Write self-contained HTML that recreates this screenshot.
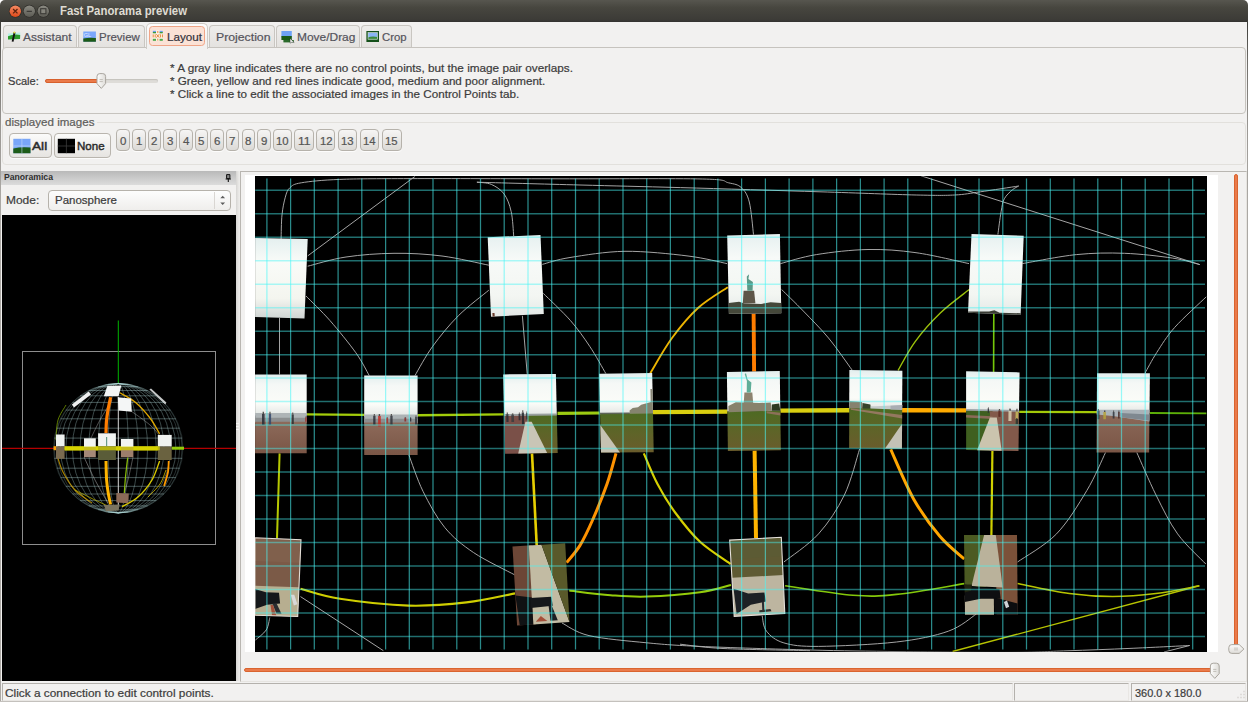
<!DOCTYPE html>
<html lang="en"><head><meta charset="utf-8"><title>Fast Panorama preview</title>
<style>
html,body{margin:0;padding:0;background:#fff}
body{width:1248px;height:702px;position:relative;overflow:hidden;font-family:"Liberation Sans","DejaVu Sans",sans-serif}
#win{position:absolute;left:0;top:0;width:1248px;height:702px;background:#f2f1f0;border-radius:5px 5px 0 0;overflow:hidden}
.t{position:absolute;white-space:nowrap;transform-origin:0 50%;display:block;-webkit-text-stroke:.22px currentColor}
.a{position:absolute;box-sizing:border-box}
.tab{position:absolute;box-sizing:border-box;top:25px;height:23px;border:1px solid #c9c6c1;border-bottom:none;border-radius:4px 4px 0 0;background:linear-gradient(#eeedeb,#e4e2df)}
.btn{position:absolute;box-sizing:border-box;border:1px solid #b9b5ae;border-radius:4px;background:linear-gradient(#fbfbfa,#e6e4e1);box-shadow:0 1px 0 rgba(255,255,255,.7)}
.nb{position:absolute;box-sizing:border-box;top:129px;height:22px;border:1px solid #b6b2ab;border-radius:4px;background:linear-gradient(#f6f5f4,#dcdad6);box-shadow:0 1px 0 rgba(255,255,255,.8)}
svg{position:absolute;left:0;top:0}
</style></head><body><div id="win">
<div class="a" style="left:0;top:0;width:1248px;height:22px;background:linear-gradient(#57564f,#47463f 35%,#3c3b37 90%,#33322f)"></div>
<div class="a" style="left:0;top:21px;width:1.3px;height:681px;background:linear-gradient(#3c3b37,#6f6d69 40px,#9c9995 110px,#aba8a4 180px,#aba8a4)"></div>
<div class="a" style="left:1246.6px;top:21px;width:1.4px;height:681px;background:linear-gradient(#3c3b37,#6f6d69 40px,#9c9995 110px,#aba8a4 180px,#aba8a4)"></div>
<div class="a" style="left:0;top:701px;width:1248px;height:1px;background:#c4c1bd"></div>
<svg width="60" height="22" viewBox="0 0 60 22">
<defs><linearGradient id="gc" x1="0" y1="0" x2="0" y2="1"><stop offset="0" stop-color="#f58a63"/><stop offset="1" stop-color="#df4a1a"/></linearGradient>
<linearGradient id="gg" x1="0" y1="0" x2="0" y2="1"><stop offset="0" stop-color="#8b8a82"/><stop offset="1" stop-color="#5c5b54"/></linearGradient></defs>
<circle cx="15.3" cy="11.2" r="6.4" fill="#2f2e2a"/><circle cx="15.3" cy="11.2" r="5.7" fill="url(#gc)"/>
<path d="M13.1 9 L17.5 13.4 M17.5 9 L13.1 13.4" stroke="#5e2410" stroke-width="1.3" fill="none"/>
<circle cx="29.3" cy="11.2" r="6.4" fill="#2f2e2a"/><circle cx="29.3" cy="11.2" r="5.7" fill="url(#gg)"/>
<path d="M26.7 11.4 H31.9" stroke="#3c3b37" stroke-width="1.3"/>
<circle cx="43.3" cy="11.2" r="6.4" fill="#2f2e2a"/><circle cx="43.3" cy="11.2" r="5.7" fill="url(#gg)"/>
<rect x="40.7" y="8.7" width="5.2" height="5" fill="#85847c" stroke="#3c3b37" stroke-width="1.1"/>
</svg>
<span class="t" style="left:59.70px;top:3.00px;font-size:12px;line-height:16px;color:#dfdbd2;font-weight:bold;-webkit-text-stroke:0;transform:scaleX(0.9474);">Fast Panorama preview</span>
<div class="tab" style="left:2.5px;width:74.2px"></div>
<div class="tab" style="left:78.3px;width:66.4px"></div>
<div class="tab" style="left:208.8px;width:66.1px"></div>
<div class="tab" style="left:276.3px;width:83.7px"></div>
<div class="tab" style="left:361.3px;width:51.1px"></div>
<div class="a" style="left:2px;top:47px;width:1244px;height:67px;border:1px solid #c6c3be;border-radius:4px;background:#f2f1f0"></div>
<div class="a" style="left:146px;top:23px;width:62px;height:26px;border:1px solid #cfccc7;border-bottom:none;border-radius:5px 5px 0 0;background:linear-gradient(#fdfdfd,#f2f1f0 70%)"></div>
<div class="a" style="left:149px;top:26px;width:56px;height:20px;border:1px solid #f0a587;border-radius:3.5px;background:#fbe2d6"></div>
<span class="t" style="left:23.10px;top:29.00px;font-size:11.8px;line-height:16px;color:#55545c;transform:scaleX(1.0152);">Assistant</span>
<span class="t" style="left:98.90px;top:29.00px;font-size:11.8px;line-height:16px;color:#55545c;transform:scaleX(0.9722);">Preview</span>
<span class="t" style="left:166.80px;top:29.00px;font-size:11.8px;line-height:16px;color:#33323c;transform:scaleX(0.9880);">Layout</span>
<span class="t" style="left:215.50px;top:29.00px;font-size:11.8px;line-height:16px;color:#55545c;transform:scaleX(1.0387);">Projection</span>
<span class="t" style="left:296.70px;top:29.00px;font-size:11.8px;line-height:16px;color:#55545c;transform:scaleX(1.0120);">Move/Drag</span>
<span class="t" style="left:381.70px;top:29.00px;font-size:11.8px;line-height:16px;color:#55545c;transform:scaleX(0.9619);">Crop</span>
<svg width="420" height="50" viewBox="0 0 420 50">
<g><path d="M8 33.5 L20.3 32.5 L20 39 L8 39.6 Z" fill="#b8f0e4"/><path d="M8 36.3 Q14 33.5 20.2 35 L20 39 L8 39.6 Z" fill="#2c9a2c"/>
<path d="M14.6 32.2 L12.6 41.6" stroke="#111" stroke-width="1.9"/><circle cx="14.4" cy="32.6" r="1" fill="#e8e040"/></g>
<g><rect x="83.3" y="31.5" width="12.6" height="10.2" fill="#7ba7fb"/><path d="M83.3 38.6 Q89 37.2 95.9 38 V41.7 H83.3 Z" fill="#1c5a16"/>
<text x="83.8" y="36.6" font-family="Liberation Sans,sans-serif" font-size="5.5" fill="#e4ecff">GL</text></g>
<g><rect x="152.4" y="30.4" width="10.8" height="10.6" fill="#fdf1e6"/>
<rect x="152.8" y="30.8" width="3.2" height="1.3" fill="#6d9eea"/><rect x="152.8" y="32" width="3.2" height="1.3" fill="#3c9a3c"/>
<rect x="159.6" y="30.8" width="3.2" height="1.3" fill="#6d9eea"/><rect x="159.6" y="32" width="3.2" height="1.3" fill="#3c9a3c"/>
<rect x="152.8" y="38.4" width="3.2" height="1" fill="#b8e0b8"/><rect x="152.8" y="39.2" width="3.2" height="1.5" fill="#2c9a2c"/>
<rect x="159.6" y="38.4" width="3.2" height="1" fill="#b8e0b8"/><rect x="159.6" y="39.2" width="3.2" height="1.5" fill="#2c9a2c"/>
<path d="M153.2 34.4 V37.4 M155.2 34.4 V37.4 M160.4 34.4 V37.4 M162.4 34.4 V37.4 M156.4 34.2 L159.2 37.6 M159.2 34.2 L156.4 37.6 M157.8 31 V33 M157.8 38.6 V40.6" stroke="#e58a3c" stroke-width="1" fill="none"/></g>
<g><rect x="281.4" y="31" width="10.4" height="6.4" fill="#6ea2f6"/><rect x="281.4" y="36" width="10.4" height="4" fill="#1a5c1a"/>
<rect x="283.4" y="40" width="10.4" height="2.4" fill="#2a6a2a"/><path d="M290 38.4 L294.2 42.4 L291.6 42.2 L290.2 43.2 Z" fill="#fff" stroke="#222" stroke-width=".4"/></g>
<g><rect x="366.4" y="31" width="12.6" height="11" fill="#14501a"/><rect x="368" y="32.6" width="9.4" height="6.6" fill="#8ab4f4"/>
<path d="M368 37.4 Q372 36 377.4 37 V39.2 H368 Z" fill="#3c8a3c"/><rect x="368" y="32.6" width="9.4" height="6.6" fill="none" stroke="#dfe8d8" stroke-width=".6"/></g>
</svg>
<span class="t" style="left:7.80px;top:73.00px;font-size:11.8px;line-height:16px;color:#3c3c3c;transform:scaleX(0.9392);">Scale:</span>
<div class="a" style="left:45px;top:79px;width:113px;height:4px;border-radius:2px;background:#dedcd8;box-shadow:inset 0 1px 1px #c4c1bc"></div>
<div class="a" style="left:45px;top:79px;width:56px;height:4px;border-radius:2px;background:#ea7a4a;border:1px solid #d7602c"></div>
<svg width="120" height="95" viewBox="0 0 120 95"><defs><linearGradient id="gh" x1="0" y1="0" x2="1" y2="0"><stop offset="0" stop-color="#fdfdfc"/><stop offset="1" stop-color="#dedcd8"/></linearGradient></defs>
<path d="M99.8 73.6 H102.8 Q105.6 73.6 105.6 76.4 V83.6 L101.3 88.4 L97 83.6 V76.4 Q97 73.6 99.8 73.6 Z" fill="url(#gh)" stroke="#a9a59e" stroke-width="1"/>
<path d="M99.6 79.6 H102.8 M99.6 81.6 H102.8" stroke="#b5b1aa" stroke-width=".8"/></svg>
<span class="t" style="left:169.60px;top:60.00px;font-size:11.8px;line-height:16px;color:#3c3c3c;transform:scaleX(0.9958);">* A gray line indicates there are no control points, but the image pair overlaps.</span>
<span class="t" style="left:169.60px;top:73.00px;font-size:11.8px;line-height:16px;color:#3c3c3c;transform:scaleX(0.9868);">* Green, yellow and red lines indicate good, medium and poor alignment.</span>
<span class="t" style="left:169.60px;top:86.00px;font-size:11.8px;line-height:16px;color:#3c3c3c;transform:scaleX(0.9878);">* Click a line to edit the associated images in the Control Points tab.</span>
<div class="a" style="left:2px;top:122px;width:1244px;height:43px;border:1px solid #e2e0dc;border-radius:4px"></div>
<div class="a" style="left:3px;top:118px;width:94px;height:10px;background:#f2f1f0"></div>
<span class="t" style="left:5.20px;top:114.00px;font-size:11.8px;line-height:16px;color:#5e5d5b;transform:scaleX(0.9817);">displayed images</span>
<div class="btn" style="left:9px;top:133px;width:43px;height:25px"></div>
<div class="btn" style="left:54px;top:133px;width:57px;height:25px"></div>
<svg width="120" height="160" viewBox="0 0 120 160">
<rect x="13.3" y="138.8" width="17.2" height="14.4" fill="#79a6f7"/><path d="M13.3 148.4 Q22 146.6 30.5 147.6 V153.2 H13.3 Z" fill="#1d5c18"/>
<path d="M21.9 138.8 V153.2 M13.3 146 H30.5" stroke="#cfe0fb" stroke-width=".7" opacity=".8"/>
<rect x="57.8" y="138.8" width="17.2" height="14.4" fill="#000"/><path d="M66.4 138.8 V153.2 M57.8 146 H75" stroke="#3c3c3c" stroke-width=".8"/>
</svg>
<span class="t" style="left:32.00px;top:138.00px;font-size:11.8px;line-height:16px;color:#2a2a2a;transform:scaleX(1.1590);-webkit-text-stroke:.45px #2a2a2a;">All</span>
<span class="t" style="left:76.80px;top:138.00px;font-size:11.8px;line-height:16px;color:#2a2a2a;transform:scaleX(0.9785);-webkit-text-stroke:.45px #2a2a2a;">None</span>
<div class="nb" style="left:116.0px;width:14.0px"></div>
<span class="t" style="left:119.80px;top:133.00px;font-size:11.6px;line-height:16px;color:#555;transform:scaleX(0.9921);">0</span>
<div class="nb" style="left:132.1px;width:13.5px"></div>
<span class="t" style="left:135.65px;top:133.00px;font-size:11.6px;line-height:16px;color:#555;transform:scaleX(0.9921);">1</span>
<div class="nb" style="left:147.7px;width:13.5px"></div>
<span class="t" style="left:151.25px;top:133.00px;font-size:11.6px;line-height:16px;color:#555;transform:scaleX(0.9921);">2</span>
<div class="nb" style="left:163.4px;width:13.4px"></div>
<span class="t" style="left:166.90px;top:133.00px;font-size:11.6px;line-height:16px;color:#555;transform:scaleX(0.9921);">3</span>
<div class="nb" style="left:179.0px;width:13.5px"></div>
<span class="t" style="left:182.55px;top:133.00px;font-size:11.6px;line-height:16px;color:#555;transform:scaleX(0.9921);">4</span>
<div class="nb" style="left:194.6px;width:13.4px"></div>
<span class="t" style="left:198.10px;top:133.00px;font-size:11.6px;line-height:16px;color:#555;transform:scaleX(0.9921);">5</span>
<div class="nb" style="left:210.2px;width:13.5px"></div>
<span class="t" style="left:213.75px;top:133.00px;font-size:11.6px;line-height:16px;color:#555;transform:scaleX(0.9921);">6</span>
<div class="nb" style="left:225.9px;width:13.4px"></div>
<span class="t" style="left:229.40px;top:133.00px;font-size:11.6px;line-height:16px;color:#555;transform:scaleX(0.9921);">7</span>
<div class="nb" style="left:241.5px;width:13.5px"></div>
<span class="t" style="left:245.05px;top:133.00px;font-size:11.6px;line-height:16px;color:#555;transform:scaleX(0.9921);">8</span>
<div class="nb" style="left:257.1px;width:13.5px"></div>
<span class="t" style="left:260.65px;top:133.00px;font-size:11.6px;line-height:16px;color:#555;transform:scaleX(0.9921);">9</span>
<div class="nb" style="left:272.7px;width:19.5px"></div>
<span class="t" style="left:276.15px;top:133.00px;font-size:11.6px;line-height:16px;color:#555;transform:scaleX(0.9766);">10</span>
<div class="nb" style="left:294.4px;width:19.4px"></div>
<span class="t" style="left:297.80px;top:133.00px;font-size:11.6px;line-height:16px;color:#555;transform:scaleX(1.0465);">11</span>
<div class="nb" style="left:316.3px;width:19.2px"></div>
<span class="t" style="left:319.60px;top:133.00px;font-size:11.6px;line-height:16px;color:#555;transform:scaleX(0.9766);">12</span>
<div class="nb" style="left:337.9px;width:19.2px"></div>
<span class="t" style="left:341.20px;top:133.00px;font-size:11.6px;line-height:16px;color:#555;transform:scaleX(0.9766);">13</span>
<div class="nb" style="left:360.0px;width:19.2px"></div>
<span class="t" style="left:363.30px;top:133.00px;font-size:11.6px;line-height:16px;color:#555;transform:scaleX(0.9766);">14</span>
<div class="nb" style="left:381.6px;width:20.0px"></div>
<span class="t" style="left:385.30px;top:133.00px;font-size:11.6px;line-height:16px;color:#555;transform:scaleX(0.9766);">15</span>
<div class="a" style="left:1px;top:171px;width:235px;height:14px;background:linear-gradient(#b9b9b9,#dcdcdc)"></div>
<span class="t" style="left:4.20px;top:169.00px;font-size:8.8px;line-height:16px;color:#2e2e2e;font-weight:bold;-webkit-text-stroke:0;transform:scaleX(0.9822);">Panoramica</span>
<svg width="240" height="215" viewBox="0 0 240 215">
<path d="M226.6 174.6 H229.9 V178.6 H226.6 Z" fill="#888" stroke="#111" stroke-width="1"/><path d="M225.6 179 H231 M228.3 179 V182" stroke="#111" stroke-width="1.1"/>
</svg>
<span class="t" style="left:5.80px;top:192.00px;font-size:11.8px;line-height:16px;color:#3c3c3c;transform:scaleX(1.0124);">Mode:</span>
<div class="a" style="left:48px;top:190px;width:183px;height:21px;border:1px solid #b6b2ab;border-radius:4px;background:linear-gradient(#fdfdfd,#efeeec)"></div>
<div class="a" style="left:214px;top:192px;width:1px;height:17px;background:#d9d6d2"></div>
<svg width="240" height="215" viewBox="0 0 240 215"><path d="M220.3 198.2 L222.7 195.7 L225.1 198.2 Z M220.3 202.6 L222.7 205.1 L225.1 202.6 Z" fill="#5c5c5c"/></svg>
<span class="t" style="left:55.00px;top:192.00px;font-size:11.8px;line-height:16px;color:#3c3c3c;transform:scaleX(0.9743);">Panosphere</span>
<div class="a" style="left:2px;top:215px;width:234px;height:466px;background:#000"></div>
<div class="a" style="left:235.6px;top:171px;width:4.6px;height:510px;background:linear-gradient(to right,#d6d5d3,#e6e5e3 55%,#eeedeb)"></div>
<div class="a" style="left:236.4px;top:422.6px;width:2.4px;height:1px;background:#f6f6f5"></div><div class="a" style="left:236.4px;top:425.6px;width:2.4px;height:1px;background:#f6f6f5"></div><div class="a" style="left:236.4px;top:428.6px;width:2.4px;height:1.4px;background:#fafafa"></div>
<div class="a" style="left:240px;top:171px;width:1007px;height:511px;border:1px solid #b9b6b1;border-bottom-color:#e6e4e0;border-right-color:#e6e4e0"></div>
<div class="a" style="left:245px;top:175.4px;width:973px;height:476.5px;background:#fff"></div>
<div class="a" style="left:255.1px;top:176.3px;width:951.5px;height:475.5px;background:#000"></div>
<div class="a" style="left:1234px;top:174px;width:4px;height:474px;border-radius:2px;background:#ea7a4a;border:1px solid #d9642f"></div>
<div class="a" style="left:243.5px;top:668px;width:968px;height:4px;border-radius:2px;background:#ea7a4a;border:1px solid #d9642f"></div>
<svg width="1248" height="702" viewBox="0 0 1248 702" style="pointer-events:none">
<path d="M1231.8 644.6 H1239.2 L1243.9 649 L1239.2 653.4 H1231.8 Q1228.8 653.4 1228.8 650.4 V647.6 Q1228.8 644.6 1231.8 644.6 Z" fill="url(#gh2)" stroke="#a9a59e"/>
<defs><linearGradient id="gh2" x1="0" y1="0" x2="0" y2="1"><stop offset="0" stop-color="#fdfdfc"/><stop offset="1" stop-color="#dedcd8"/></linearGradient>
<linearGradient id="gh3" x1="0" y1="0" x2="1" y2="0"><stop offset="0" stop-color="#fdfdfc"/><stop offset="1" stop-color="#dedcd8"/></linearGradient></defs>
<path d="M1235 647.4 V650.6 M1237 647.4 V650.6" stroke="#b5b1aa" stroke-width=".8"/>
<path d="M1213.2 663.2 H1216.4 Q1219.2 663.2 1219.2 666 V673.6 L1214.8 678.4 L1210.4 673.6 V666 Q1210.4 663.2 1213.2 663.2 Z" fill="url(#gh3)" stroke="#a9a59e"/>
<path d="M1213.2 669.4 H1216.4 M1213.2 671.4 H1216.4" stroke="#b5b1aa" stroke-width=".8"/>
</svg>
<div class="a" style="left:2px;top:683px;width:1011px;height:18px;border:1px solid #b4b1ac;border-right-color:#e9e7e4;border-bottom-color:#e9e7e4"></div>
<div class="a" style="left:1014px;top:683px;width:115px;height:18px;border:1px solid #b4b1ac;border-right-color:#e9e7e4;border-bottom-color:#e9e7e4"></div>
<div class="a" style="left:1131px;top:683px;width:115px;height:18px;border:1px solid #b4b1ac;border-right-color:#e9e7e4;border-bottom-color:#e9e7e4"></div>
<span class="t" style="left:4.90px;top:685.00px;font-size:11.8px;line-height:16px;color:#3c3c3c;transform:scaleX(1.0043);">Click a connection to edit control points.</span>
<span class="t" style="left:1134.80px;top:685.00px;font-size:11.8px;line-height:16px;color:#3c3c3c;transform:scaleX(0.9286);">360.0 x 180.0</span>
<svg width="1248" height="702" viewBox="0 0 1248 702"><path d="M1243.5 691.5h1M1243.5 694.5h1M1240.5 694.5h1M1243.5 697.5h1M1240.5 697.5h1M1237.5 697.5h1" stroke="#c9c6c1" stroke-width="1.4"/></svg>
<svg width="1248" height="702" viewBox="0 0 1248 702">
<defs>
<clipPath id="cv"><rect x="255.1" y="176.3" width="951.5" height="475.5"/></clipPath>
<linearGradient id="sky" x1="0" y1="0" x2="0" y2="1"><stop offset="0" stop-color="#e2eeee"/><stop offset=".25" stop-color="#f5f8f6"/><stop offset=".7" stop-color="#fbfcf8"/><stop offset="1" stop-color="#e2e6e4"/></linearGradient>
<linearGradient id="sky2" x1="0" y1="0" x2="0" y2="1"><stop offset="0" stop-color="#e4efef"/><stop offset=".3" stop-color="#f9fbf8"/><stop offset=".75" stop-color="#f4f5ef"/><stop offset="1" stop-color="#cfd4d3"/></linearGradient>
<linearGradient id="skyA" x1="0" y1="0" x2="0" y2="1"><stop offset="0" stop-color="#e6f0f0"/><stop offset=".3" stop-color="#f7faf8"/><stop offset=".75" stop-color="#f3f6f2"/><stop offset="1" stop-color="#e3e8e6"/></linearGradient>
<linearGradient id="brown" x1="0" y1="0" x2="0" y2="1"><stop offset="0" stop-color="#8d6a5a"/><stop offset="1" stop-color="#7a5646"/></linearGradient>
<linearGradient id="grass" x1="0" y1="0" x2="0" y2="1"><stop offset="0" stop-color="#4d6a22"/><stop offset=".5" stop-color="#5e6428"/><stop offset="1" stop-color="#6a5c2c"/></linearGradient>
</defs>
<g clip-path="url(#cv)">
<path d="M281.1 238.9C281.2 234.9 281.3 221.9 282 214.9C282.7 207.9 284 201.8 285.3 197.2C286.6 192.6 287.3 190 290 187.6C292.7 185.2 293 184.2 301.3 182.8C309.6 181.4 321.6 180.1 339.7 179.4C357.8 178.7 373.3 178.7 410 178.6C446.7 178.5 511.2 178.7 560 178.8C608.8 178.9 674.7 178.3 702.8 179C730.9 179.7 722.1 181.4 728.5 182.8C734.9 184.2 737.8 184.4 741.3 187.6C744.8 190.8 747.3 194.2 749.3 202C751.3 209.8 752.8 229.1 753.5 234.5" fill="none" stroke="#adadad" stroke-width="0.95"/>
<path d="M476.9 182.2C479.3 182.6 486.8 182.4 491.3 184.4C495.8 186.4 500.8 189.4 504.1 194C507.4 198.6 509.6 204.7 511.2 211.7C512.8 218.7 513.3 231.9 513.7 236" fill="none" stroke="#adadad" stroke-width="0.95"/>
<path d="M476.9 182.2C494.1 182.7 546.1 184.1 580 185C613.9 185.9 640.4 186.5 680.4 187.6C720.4 188.7 780.7 190.6 820 191.8C859.3 193 893.8 194.5 916.2 195C938.6 195.5 943.9 195.5 954.6 195C965.3 194.5 969.6 193.3 980.3 191.8C991 190.3 1012.3 187 1018.7 186" fill="none" stroke="#adadad" stroke-width="0.95"/>
<path d="M997.9 234.5C998.4 230.7 1000 217.6 1001.1 211.7C1002.2 205.8 1002.4 202.4 1004.3 198.8C1006.2 195.2 1009.9 192 1012.3 189.9C1014.7 187.8 1017.6 186.7 1018.7 186" fill="none" stroke="#adadad" stroke-width="0.95"/>
<path d="M921 175.8L1199.8 264.6" fill="none" stroke="#adadad" stroke-width="0.95"/>
<path d="M1022.4 263.6C1031.4 262.1 1059.4 256.3 1076.4 254.6C1093.4 252.9 1108.5 252.7 1124.5 253.3C1140.5 253.9 1160 256.2 1172.6 258.1C1185.1 260 1195.3 263.5 1199.8 264.6" fill="none" stroke="#adadad" stroke-width="0.95"/>
<path d="M780.5 263.6C786.5 262.1 801.8 256.9 816.4 254.6C831 252.2 851.4 249.8 868 249.5C884.6 249.2 899.2 250.3 916 252.7C932.8 255 960.2 261.8 969 263.6" fill="none" stroke="#adadad" stroke-width="0.95"/>
<path d="M307.7 266.2C314.1 264.7 331.6 259.1 346 257C360.4 254.8 378 253.5 394 253.3C410 253.1 426.2 254 442 256C457.8 258 481 263.7 488.8 265.2" fill="none" stroke="#adadad" stroke-width="0.95"/>
<path d="M542.3 264.4C546.9 263.2 556.2 259.7 570 257.5C583.8 255.3 605.3 251.6 625 251.3C644.7 251.1 671 253.9 688 256C705 258.1 720.5 262.3 727 263.6" fill="none" stroke="#adadad" stroke-width="0.95"/>
<path d="M307.7 255.9L415 176.4" fill="none" stroke="#adadad" stroke-width="0.95"/>
<path d="M306 296C310 300.1 321.7 311.2 330 320.6C338.3 330.1 349.3 343.6 355.8 352.7C362.3 361.8 367 371.7 369.2 375.5" fill="none" stroke="#adadad" stroke-width="0.95"/>
<path d="M488.8 290.2C483.7 294.5 467.7 306.4 458.3 315.8C448.9 325.2 439.9 336.4 432.7 346.3C425.5 356.2 417.9 370.6 415 375.5" fill="none" stroke="#adadad" stroke-width="0.95"/>
<path d="M522.4 315.8L527.2 373.8" fill="none" stroke="#adadad" stroke-width="0.95"/>
<path d="M543.3 293.4C547.8 297.9 562.8 311.8 570.5 320.6C578.2 329.4 583.8 337.5 589.7 346.3C595.6 355.1 603.1 369 605.8 373.5" fill="none" stroke="#adadad" stroke-width="0.95"/>
<path d="M279.5 318L279.5 374.5" fill="none" stroke="#adadad" stroke-width="0.95"/>
<path d="M781.6 289.5C785.2 293.1 795.5 302.9 803.3 311C811.1 319.1 820.4 328.2 828.5 338C836.6 347.8 848.1 364.6 852 369.9" fill="none" stroke="#adadad" stroke-width="0.95"/>
<path d="M1206.4 296.7C1201.1 301.8 1183 318.1 1174.7 327.4C1166.4 336.7 1161.6 345 1156.7 352.6C1151.8 360.2 1147 369.6 1145.1 373" fill="none" stroke="#adadad" stroke-width="0.95"/>
<path d="M1105.5 452.5C1102.4 458.9 1095 477 1086.8 490.6C1078.6 504.2 1068 522 1056.5 533.9C1045 545.8 1024 557.3 1017.5 562" fill="none" stroke="#adadad" stroke-width="0.95"/>
<path d="M1136.8 452.5C1140 459.6 1149.2 481.4 1156 495C1162.8 508.6 1169.3 522.4 1177.6 533.9C1185.9 545.4 1201.1 559 1205.8 564" fill="none" stroke="#adadad" stroke-width="0.95"/>
<path d="M859.6 449C857.1 456.7 851.2 480.9 844.4 495C837.5 509.1 828.6 522.7 818.5 533.9C808.4 545.1 789.7 557.3 783.9 562" fill="none" stroke="#adadad" stroke-width="0.95"/>
<path d="M408.7 454.5C411.1 460.6 417 479.2 423 491.3C429 503.4 436.3 517.2 444.7 527.4C453.1 537.6 461.9 544.7 473.6 552.6C485.3 560.5 508.1 571.3 515 575" fill="none" stroke="#adadad" stroke-width="0.95"/>
<path d="M300.5 596.6L383.4 650.7" fill="none" stroke="#adadad" stroke-width="0.95"/>
<path d="M269.8 617.5C269.2 619.6 268.6 626.2 266.2 630C263.8 633.8 257.2 638.3 255.4 640" fill="none" stroke="#adadad" stroke-width="0.95"/>
<path d="M562 623C566.5 625.1 574.9 632.3 589 635.6C603.1 638.9 628.2 641 646.7 642.8C665.2 644.6 672.8 645.2 700 646.4C727.2 647.6 776.7 649.1 810 650C843.3 650.9 866.7 651.2 900 651.6C933.3 652 982.2 652.5 1010 652.4C1037.8 652.3 1047 651.5 1067 650.8C1087 650.1 1109.5 649.3 1130 648.4C1150.5 647.5 1179.8 646 1189.7 645.5" fill="none" stroke="#adadad" stroke-width="0.95"/>
<path d="M1164 652L1189.7 645.5" fill="none" stroke="#adadad" stroke-width="0.95"/>
<path d="M762.2 616C762.9 618.5 762.9 626.7 766.5 631.2C770.1 635.7 775.2 640.4 783.9 642.9C792.6 645.4 799.8 646.5 818.5 646.4C837.2 646.2 874.8 644.5 896.4 642C918 639.5 935 635.9 948.3 631.2C961.6 626.5 971.7 616.9 976.4 614" fill="none" stroke="#adadad" stroke-width="0.95"/>
<path d="M680 644.2C687.2 644.9 701.3 647.4 723 648.5C744.7 649.6 795.5 650.3 810 650.7" fill="none" stroke="#adadad" stroke-width="0.95"/>
<path d="M306.8 414.3L364.4 414.8" fill="none" stroke="#a4cc0a" stroke-width="2.2"/>
<path d="M417.6 415.2L503.5 414.4" fill="none" stroke="#a2cc0a" stroke-width="2.4"/>
<path d="M557.5 413.4L599.4 413" fill="none" stroke="#9ccb12" stroke-width="3.2"/>
<path d="M652.6 412.2L727.5 411.6" fill="none" stroke="#d9ce10" stroke-width="4.2"/>
<path d="M780.4 410.6L849.6 410.2" fill="none" stroke="#d9ce10" stroke-width="4.4"/>
<path d="M902 410.2L966.4 410.4" fill="none" stroke="#ffab00" stroke-width="4.4"/>
<path d="M1019.2 411.8L1097.2 412.2" fill="none" stroke="#a3c908" stroke-width="2.2"/>
<path d="M1149.8 413L1206.6 413.4" fill="none" stroke="#5cae08" stroke-width="1.8"/>
<path d="M753.6 313.4L754.1 371.6" fill="none" stroke="#ff7d00" stroke-width="3.9"/>
<path d="M754.6 450.6L756 538" fill="none" stroke="#ffb400" stroke-width="4.0"/>
<path d="M993.8 314L993.6 372" fill="none" stroke="#74c80a" stroke-width="1.6"/>
<path d="M992.4 451L991.4 535.2" fill="none" stroke="#cfd000" stroke-width="2.2"/>
<path d="M279.6 453.4L277 538.4" fill="none" stroke="#b6c800" stroke-width="2.0"/>
<path d="M532 453.4L536.7 545" fill="none" stroke="#e6cf00" stroke-width="2.6"/>
<path d="M650.2 373.4C653.8 367.5 664 348.9 672 338C680 327.1 688.7 316.5 698 308C707.3 299.5 722.8 290.7 727.8 287.2" fill="none" stroke="#ecb400" stroke-width="1.9"/>
<path d="M616 453.4C614.5 458.5 610.9 472.9 607 484C603.1 495.1 597.1 509.8 592.6 520C588.1 530.2 584.3 538.3 580 545.4C575.7 552.5 568.8 559.8 566.6 562.7" fill="none" stroke="#ff9200" stroke-width="3.0"/>
<path d="M643.8 453.4C646.1 458.5 652.2 474.1 657.5 484C662.8 493.9 668.4 503.4 675.5 513C682.6 522.6 690.8 533.3 700 541.8C709.2 550.3 725.5 560.3 730.6 564" fill="none" stroke="#d6d000" stroke-width="2.2"/>
<path d="M890.7 449.4C894.5 457.7 905.6 484.8 913.7 499.2C921.9 513.6 931.2 526 939.6 536C948 546 960.2 555.2 964.3 559" fill="none" stroke="#ffa600" stroke-width="3.0"/>
<path d="M898.1 370.4C900.9 365.6 908 351.4 915 341.8C922 332.2 931.3 321.7 940.3 313C949.3 304.3 964.4 293.4 969.2 289.5" fill="none" stroke="#9cc10a" stroke-width="1.4"/>
<path d="M300.5 588.7C307.1 590.4 322 596 340 598.8C358 601.6 387.6 605 408.7 605.6C429.8 606.2 448.7 604.4 466.4 602.4C484.1 600.4 506.9 594.9 515 593.4" fill="none" stroke="#cfce00" stroke-width="2.1"/>
<path d="M569.2 590.5C576.1 591.3 597.7 594.2 610.6 595.2C623.5 596.2 631.8 597.1 646.7 596.6C661.6 596.1 686 594.2 700 592.3C714 590.4 725.8 586.2 731 585" fill="none" stroke="#94cc0a" stroke-width="2.0"/>
<path d="M785.1 585.8C796.4 587.4 834.5 593.9 853 595.3C871.5 596.7 877.9 596.3 896.4 594.4C914.9 592.5 953 585.4 964.3 583.6" fill="none" stroke="#84c80a" stroke-width="1.6"/>
<path d="M1017.5 583.6C1026.2 585.3 1053.5 591.4 1069.4 593.6C1085.3 595.8 1098.3 596.6 1112.7 596.6C1127.1 596.6 1141.6 595.4 1156 593.6C1170.4 591.8 1192.1 587.1 1199.3 585.8" fill="none" stroke="#b8c400" stroke-width="1.5"/>
<path d="M1199.3 585.8L952.6 651.5" fill="none" stroke="#b8c400" stroke-width="1.4"/>
<polygon points="255,238 307.7,239 304.5,318.5 255,317" fill="url(#sky2)"/>
<polygon points="487.7,237.2 540.5,235.1 543.8,314.1 491,316.7" fill="url(#skyA)"/>
<polygon points="492.4,313 494.5,312.9 494.7,316.5 492.6,316.6" fill="#6a3a2a"/>
<polygon points="727.2,235.4 779.9,234.1 781.3,313.3 728.9,313.7" fill="url(#skyA)"/>
<polygon points="728.7,303.1 739.1,301.8 744.4,303.4 761.2,304 770.6,302.3 781.1,303 781.3,313.3 728.9,313.7" fill="#45483a"/>
<polygon points="743.6,290.8 754.1,290.7 755.4,303.3 742.8,303.4" fill="#5d5648"/>
<polygon points="746.8,276.6 749.1,274.2 748.4,278.9 752.9,282 752.6,290.7 747.3,290.8" fill="#5a9a88"/>
<polygon points="971.5,234 1023.7,235.8 1020.6,314.8 968,312.8" fill="url(#skyA)"/>
<polygon points="968.1,311.6 989.1,311.6 994.4,310.2 999.6,312.8 1020.7,313.2 1020.6,314.8 968,312.8" fill="#3a3c34"/>
<polygon points="255,374.4 306.7,374.4 306.7,415.4 255,415.4" fill="url(#sky)"/>
<polygon points="255,413.1 306.7,413.1 306.7,422.5 255,422.5" fill="#aeb4b6"/>
<polygon points="255,417.8 306.7,417.8 306.7,422.5 255,422.5" fill="#8c8f90"/>
<polygon points="255,421.7 306.7,421.7 306.7,453.3 255,453.3" fill="url(#brown)"/>
<polygon points="262,413.9 264.6,413.9 264.6,424.9 262,424.9" fill="#2a2c34" opacity=".85"/>
<polygon points="262.6,411.8 264,411.8 264,413.9 262.6,413.9" fill="#3a3430" opacity=".8"/>
<polygon points="268.9,413.9 271.1,413.9 271.1,424.9 268.9,424.9" fill="#34466a" opacity=".85"/>
<polygon points="269.4,411.8 270.6,411.8 270.6,413.9 269.4,413.9" fill="#3a3430" opacity=".8"/>
<polygon points="291.7,414.4 293.8,414.4 293.8,424.1 291.7,424.1" fill="#2c2e30" opacity=".85"/>
<polygon points="292.2,412.5 293.3,412.5 293.3,414.4 292.2,414.4" fill="#3a3430" opacity=".8"/>
<polygon points="305.3,417.2 306.6,417.2 306.6,421.7 305.3,421.7" fill="#a02018" opacity=".85"/>
<polygon points="305.6,416.3 306.3,416.3 306.3,417.2 305.6,417.2" fill="#3a3430" opacity=".8"/>
<polygon points="364.2,375.4 417.6,375.4 417.6,416.8 364.2,416.8" fill="url(#sky)"/>
<polygon points="364.2,414.5 417.6,414.5 417.6,423.2 364.2,423.2" fill="#adb3b5"/>
<polygon points="364.2,418.8 417.6,418.8 417.6,423.2 364.2,423.2" fill="#8c8f90"/>
<polygon points="364.2,422.4 417.6,422.4 417.6,455.1 364.2,455.1" fill="url(#brown)"/>
<polygon points="373.2,415.7 375.5,415.7 375.5,424.8 373.2,424.8" fill="#2a2c34" opacity=".85"/>
<polygon points="373.8,413.9 374.9,413.9 374.9,415.7 373.8,415.7" fill="#3a3430" opacity=".8"/>
<polygon points="378.1,416 380.8,416 380.8,426.4 378.1,426.4" fill="#c42a22" opacity=".85"/>
<polygon points="378.7,413.9 380.1,413.9 380.1,416 378.7,416" fill="#3a3430" opacity=".8"/>
<polygon points="386.3,418 388.1,418 388.1,423.2 386.3,423.2" fill="#a8302a" opacity=".85"/>
<polygon points="386.7,417 387.6,417 387.6,418 386.7,418" fill="#3a3430" opacity=".8"/>
<polygon points="390.3,415.7 392.6,415.7 392.6,424.8 390.3,424.8" fill="#33353c" opacity=".85"/>
<polygon points="390.8,413.9 392,413.9 392,415.7 390.8,415.7" fill="#3a3430" opacity=".8"/>
<polygon points="404.4,417.7 406.2,417.7 406.2,421.6 404.4,421.6" fill="#8c2a26" opacity=".85"/>
<polygon points="404.8,416.9 405.8,416.9 405.8,417.7 404.8,417.7" fill="#3a3430" opacity=".8"/>
<polygon points="410,417.7 411.3,417.7 411.3,421.6 410,421.6" fill="#2a2c34" opacity=".85"/>
<polygon points="410.3,416.9 411,416.9 411,417.7 410.3,417.7" fill="#3a3430" opacity=".8"/>
<polygon points="415.1,417 416.9,417 416.9,424.8 415.1,424.8" fill="#2a2c34" opacity=".85"/>
<polygon points="415.5,415.4 416.5,415.4 416.5,417 415.5,417" fill="#3a3430" opacity=".8"/>
<polygon points="503.2,374.4 555.9,374 556.8,415.1 504.2,415.6" fill="url(#sky)"/>
<polygon points="504.2,414.4 530.5,414.2 531.4,453.4 505.1,453.7" fill="#7a5048"/>
<polygon points="527.9,414.2 556.8,413.9 557.7,453 528.8,453.4" fill="url(#grass)"/>
<polygon points="525.4,421.7 531.7,421.7 547.2,453.1 518.2,453.5" fill="#c9c5b6"/>
<polygon points="504.1,414 556.8,413.5 556.8,415.5 504.2,416" fill="#9aa0a0"/>
<polygon points="506.2,414.2 508.4,414.1 508.6,421.9 506.4,422" fill="#2a2c34" opacity=".85"/>
<polygon points="506.7,412.6 507.9,412.6 507.9,414.1 506.7,414.1" fill="#3a3430" opacity=".8"/>
<polygon points="511.3,414.8 513.9,414.7 514.1,421.9 511.4,421.9" fill="#3a3c40" opacity=".85"/>
<polygon points="511.9,413.4 513.3,413.3 513.3,414.7 511.9,414.7" fill="#3a3430" opacity=".8"/>
<polygon points="518.5,413.7 520.3,413.7 520.5,420.2 518.7,420.2" fill="#2a2c34" opacity=".85"/>
<polygon points="518.9,412.5 519.8,412.5 519.9,413.7 519,413.7" fill="#3a3430" opacity=".8"/>
<polygon points="521.7,412.5 523.9,412.4 524.2,424.1 522,424.2" fill="#23252a" opacity=".85"/>
<polygon points="522.2,410.2 523.3,410.2 523.4,412.5 522.2,412.5" fill="#3a3430" opacity=".8"/>
<polygon points="526.1,412.9 527.4,412.9 527.6,419.3 526.3,419.4" fill="#2a2c34" opacity=".85"/>
<polygon points="526.4,411.6 527.1,411.6 527.1,412.9 526.4,412.9" fill="#3a3430" opacity=".8"/>
<polygon points="599.1,373.7 652.2,373 653,414.2 600.1,414.7" fill="url(#sky)"/>
<polygon points="600.1,413.5 653,413 653.7,452.3 601,452.5" fill="url(#grass)"/>
<polygon points="600.3,424.9 620,452.4 601,452.5" fill="#c6c2b2"/>
<polygon points="629.6,410.5 632.7,408.1 638,407.2 641.2,404.8 652.7,401.5 653,413.4 629.7,413.6" fill="#85846f"/>
<polygon points="650.4,388.9 652.5,388.9 652.8,403.1 650.7,403.2" fill="#8a8878"/>
<polygon points="600,412.7 629.7,412.5 629.7,414 600.1,414.3" fill="#5d6458"/>
<polygon points="726.9,371.9 779.8,371.1 780.3,410.7 727.4,411.5" fill="url(#sky)"/>
<polygon points="727.4,411.5 780.3,410.7 780.9,450.3 727.9,451.1" fill="url(#grass)"/>
<polygon points="728.4,405.9 735.8,402.3 759.1,403.1 770.7,402.5 771.9,410.8 728.5,412.3" fill="#87826c"/>
<polygon points="771.8,404.5 779.2,403.6 780.3,410.7 771.9,410.8" fill="#2c3a22"/>
<polygon points="744.4,392.6 752.3,392.5 753.2,403.2 743.7,403.3" fill="#8e8470"/>
<polygon points="744.7,374 746,373.2 747.6,379.5 751.4,382.6 750.7,392.5 746.7,392.6 746.9,381.1" fill="#5fae98"/>
<polygon points="766.6,411.3 780.4,412.7 780.4,415.5 766.6,413.3" fill="#8c7058"/>
<polygon points="849.4,369.9 902.4,370.8 902.1,409.8 849.2,408.9" fill="url(#sky)"/>
<polygon points="849.3,406.6 902.2,407.5 901.9,448.8 849.1,448" fill="url(#grass)"/>
<polygon points="849.3,401.1 862,402.1 863,408.4 849.3,408.2" fill="#86826e"/>
<polygon points="862.5,402.9 870.4,404.6 870.9,408.5 862.5,408.4" fill="#34432a"/>
<polygon points="870.4,406.6 902.2,405.1 902.1,409.8 870.4,408.5" fill="#c5cacb"/>
<polygon points="890.5,405.7 902.2,405.1 902.1,409.8 890.5,409.6" fill="#a9adb2"/>
<polygon points="850.8,408.2 902.1,414.9 902.1,418.4 850.8,409.8" fill="#94785f"/>
<polygon points="902.1,423.8 901.9,448.8 885,448.5" fill="#c4c2b6"/>
<polygon points="966.1,371.3 1019.6,372.4 1019,411.7 966.1,410.7" fill="url(#sky)"/>
<polygon points="966.1,409.1 1019.1,410.1 1019,412.5 966.1,411.5" fill="#9da4a8"/>
<polygon points="966.1,410.7 992.6,411.2 992.3,450.6 966.1,450.1" fill="#3f5f1f"/>
<polygon points="989.9,411.2 1019,411.7 1018.5,451 989.7,450.5" fill="#82594a"/>
<polygon points="966.1,415 992.5,416.3 992.5,419.1 966.1,417.4" fill="#8c6a58"/>
<polygon points="989.9,417.4 996.8,417.6 1001.7,450.7 977.1,450.3" fill="#cbc4ae"/>
<polygon points="987.7,408.2 989,408.2 989,412.7 987.7,412.7" fill="#2a2c34" opacity=".85"/>
<polygon points="988,407.3 988.7,407.3 988.7,408.2 988,408.2" fill="#3a3430" opacity=".8"/>
<polygon points="998.4,410.4 1000.6,410.4 1000.5,416.9 998.3,416.8" fill="#5a2820" opacity=".85"/>
<polygon points="998.9,409.1 1000.1,409.1 1000,410.4 998.9,410.4" fill="#3a3430" opacity=".8"/>
<polygon points="1008.5,410.6 1011.6,410.7 1011.5,421 1008.4,420.9" fill="#d9d2b4" opacity=".85"/>
<polygon points="1009.3,408.6 1010.9,408.7 1010.9,410.7 1009.2,410.6" fill="#3a3430" opacity=".8"/>
<polygon points="1015.6,411.3 1018.3,411.4 1018.1,424.3 1015.4,424.2" fill="#c8bc5a" opacity=".85"/>
<polygon points="1016.3,408.8 1017.7,408.8 1017.6,411.4 1016.2,411.3" fill="#3a3430" opacity=".8"/>
<polygon points="1015.5,419.1 1018.2,419.1 1018.1,424.3 1015.4,424.2" fill="#20242c" opacity=".85"/>
<polygon points="1016.1,418.1 1017.5,418.1 1017.5,419.1 1016.1,419.1" fill="#3a3430" opacity=".8"/>
<polygon points="1097,373.2 1149.9,373.2 1149.5,412.9 1096.8,412.9" fill="url(#sky)"/>
<polygon points="1096.8,410.5 1149.5,410.5 1149.1,452.5 1096.5,452.5" fill="url(#brown)"/>
<polygon points="1096.8,409.7 1149.5,409.7 1149.4,421.6 1112.6,416 1096.7,414.4" fill="#aab2b8"/>
<polygon points="1120.5,412.9 1149.5,414.4 1149.4,420.8 1120.5,417.2" fill="#7f8890"/>
<polygon points="1097.2,410.7 1099.5,410.7 1099.4,419.2 1097.2,419.2" fill="#2a2c34" opacity=".85"/>
<polygon points="1097.8,409.1 1098.9,409.1 1098.9,410.7 1097.8,410.7" fill="#3a3430" opacity=".8"/>
<polygon points="1103.3,412 1106,412 1105.9,419.2 1103.3,419.2" fill="#b5a23c" opacity=".85"/>
<polygon points="1104,410.6 1105.4,410.6 1105.4,412 1104,412" fill="#3a3430" opacity=".8"/>
<polygon points="1112.8,411.9 1114.5,411.9 1114.5,418.4 1112.7,418.4" fill="#30343c" opacity=".85"/>
<polygon points="1113.2,410.6 1114.1,410.6 1114.1,411.9 1113.2,411.9" fill="#3a3430" opacity=".8"/>
<polygon points="1118,411.9 1119.8,411.9 1119.7,418.4 1118,418.4" fill="#4a2c28" opacity=".85"/>
<polygon points="1118.5,410.6 1119.4,410.6 1119.4,411.9 1118.4,411.9" fill="#3a3430" opacity=".8"/>
<polygon points="255,537.8 301,539.7 297.7,616.5 255,615.2" fill="#7b5a47"/>
<polygon points="255,537.8 301,539.7 300,562.7 255,561" fill="#80604c"/>
<polygon points="255,585.8 299,587.3 297.7,616.5 255,615.2" fill="#b7ae90"/>
<polygon points="255,588.9 265.9,592.3 279,592.8 280.1,603.6 267.1,604.8 255,609" fill="#15171a"/>
<polygon points="272.3,603.4 276.6,603.5 281.5,613.7 276.4,613.5" fill="#2a2c30"/>
<polygon points="270.5,604.9 273.1,604.9 276.4,615.9 272.1,615.7" fill="#a4503a"/>
<polygon points="290.8,594.7 294.3,594.8 297.4,604.2 293.8,605.6" fill="#d8d8d8"/>
<polygon points="255,537.8 301,539.7 297.7,616.5 255,615.2" fill="none" stroke="#e2ddd6" stroke-width="1.1"/>
<polygon points="512.5,546.4 531.5,545.3 536,624.2 517.1,625.5" fill="#6c4636"/>
<polygon points="528.8,545.4 541.5,544.7 569.5,621.9 533.3,624.4" fill="#c2bba3"/>
<polygon points="541.5,544.7 565.2,543.3 569.5,621.9" fill="#59592a"/>
<polygon points="515.4,595.4 531.8,597.5 533.3,624.4 519.7,625.3" fill="#101214"/>
<polygon points="530.3,598 551.3,596.7 552.8,605.7 530.8,607.9" fill="#15171a"/>
<polygon points="548.6,605.9 551.8,605.7 557.8,620.3 550.5,620.8" fill="#1c1e22"/>
<polygon points="535.8,621.8 540.8,616 547.4,621" fill="#a4503a"/>
<polygon points="729.7,540.1 781.3,537.3 783,575.4 732,578.2" fill="#5c5b34"/>
<polygon points="730.8,559.2 782.2,556.3 783,575.4 732,578.2" fill="#5f5a33"/>
<polygon points="731.9,577.8 783,575 784.8,613.5 734.2,616.3" fill="#bdb5a0"/>
<polygon points="733.6,588.8 748.2,593.4 764.4,592.5 765.9,601.6 750.8,604.7 736.6,613.9" fill="#1d2024"/>
<polygon points="761.9,601.8 763.9,601.7 764.3,610 762.3,610.2" fill="#2a2c30"/>
<polygon points="759.3,610.3 770.4,608.9 771.5,611.2 759.4,612.6" fill="#33302c"/>
<polygon points="729.7,540.1 781.3,537.3 784.8,613.5 734.2,616.3" fill="none" stroke="#e4e0da" stroke-width="1.1"/>
<polygon points="964,535 985.2,535 985.8,586.8 964.6,586.8" fill="#4c5a22"/>
<polygon points="995.8,535 1017,535 1017.7,614.7 996.6,614.7" fill="#7b5139"/>
<polygon points="984.1,535 995.8,535 1002.7,587.6 971.5,586" fill="#bab29b"/>
<polygon points="964.8,595.6 993.8,595.6 994,614.7 965,614.7" fill="#b9b19a"/>
<polygon points="964.6,584.4 980.5,587.6 999.5,589.2 1000.7,598.8 980.6,598.8 964.8,601.9" fill="#0e0f11"/>
<polygon points="993.8,597.2 1017.6,603.5 1017.7,614.7 995,614.7" fill="#0c0d0f"/>
<polygon points="1003.9,601.9 1007,600.4 1009.2,606.7 1006,608.3" fill="#cfd2d6"/>
<polygon points="964.6,584.4 972,584.4 971,590.8 964.7,592.4" fill="#20240f"/>
<path d="M266.9 178.6V649.6M290.6 178.6V649.6M314.3 178.6V649.6M338.1 178.6V649.6M361.8 178.6V649.6M385.6 178.6V649.6M409.3 178.6V649.6M433 178.6V649.6M456.8 178.6V649.6M480.5 178.6V649.6M504.2 178.6V649.6M528 178.6V649.6M551.7 178.6V649.6M575.5 178.6V649.6M599.2 178.6V649.6M623 178.6V649.6M646.7 178.6V649.6M670.4 178.6V649.6M694.2 178.6V649.6M717.9 178.6V649.6M741.6 178.6V649.6M765.4 178.6V649.6M789.1 178.6V649.6M812.9 178.6V649.6M836.6 178.6V649.6M860.4 178.6V649.6M884.1 178.6V649.6M907.8 178.6V649.6M931.6 178.6V649.6M955.3 178.6V649.6M979 178.6V649.6M1002.8 178.6V649.6M1026.5 178.6V649.6M1050.3 178.6V649.6M1074 178.6V649.6M1097.8 178.6V649.6M1121.5 178.6V649.6M1145.2 178.6V649.6M1169 178.6V649.6M1192.7 178.6V649.6" stroke="rgb(75,246,246)" stroke-opacity=".56" stroke-width="1.25" fill="none"/>
<path d="M255.1 190.3H1205M255.1 213.8H1205M255.1 237.3H1205M255.1 260.8H1205M255.1 284.2H1205M255.1 307.7H1205M255.1 331.2H1205M255.1 354.7H1205M255.1 378.1H1205M255.1 401.6H1205M255.1 425.1H1205M255.1 448.6H1205M255.1 472.1H1205M255.1 495.5H1205M255.1 519H1205M255.1 542.5H1205M255.1 566H1205M255.1 589.4H1205M255.1 612.9H1205M255.1 636.4H1205" stroke="rgb(70,245,245)" stroke-opacity=".45" stroke-width="1.5" fill="none"/>
</g></svg>
<svg width="240" height="702" viewBox="0 0 240 702">
<defs><clipPath id="sp"><rect x="2" y="215" width="234" height="466"/></clipPath></defs><g clip-path="url(#sp)">
<rect x="22.5" y="351.5" width="193" height="193" fill="none" stroke="#8e8e8e" stroke-width="1"/>
<path d="M118.3 320.5V383.5" stroke="#00b400" stroke-width="1"/>
<path d="M2 448.4H53.6M183.6 448.4H236" stroke="#b40000" stroke-width="1.1"/>
<path d="M108.1 512.2H128.3M98.2 509.8H138.2M88.8 505.9H147.6M80.1 500.6H156.3M72.4 494.0H164.0M65.8 486.3H170.6M60.5 477.6H175.9M56.6 468.2H179.8M54.2 458.3H182.2M53.4 448.2H183.0M54.2 438.1H182.2M56.6 428.2H179.8M60.5 418.8H175.9M65.8 410.1H170.6M72.4 402.4H164.0M80.1 395.8H156.3M88.8 390.5H147.6M98.2 386.6H138.2M108.1 384.2H128.3" stroke="#b4dcdc" stroke-opacity=".42" stroke-width=".9" fill="none"/>
<ellipse cx="118.2" cy="448.2" rx="10.1" ry="64.8" fill="none" stroke="#b4dcdc" stroke-opacity=".36" stroke-width=".9"/>
<ellipse cx="118.2" cy="448.2" rx="20.0" ry="64.8" fill="none" stroke="#b4dcdc" stroke-opacity=".36" stroke-width=".9"/>
<ellipse cx="118.2" cy="448.2" rx="29.4" ry="64.8" fill="none" stroke="#b4dcdc" stroke-opacity=".36" stroke-width=".9"/>
<ellipse cx="118.2" cy="448.2" rx="38.1" ry="64.8" fill="none" stroke="#b4dcdc" stroke-opacity=".36" stroke-width=".9"/>
<ellipse cx="118.2" cy="448.2" rx="45.8" ry="64.8" fill="none" stroke="#b4dcdc" stroke-opacity=".36" stroke-width=".9"/>
<ellipse cx="118.2" cy="448.2" rx="52.4" ry="64.8" fill="none" stroke="#b4dcdc" stroke-opacity=".36" stroke-width=".9"/>
<ellipse cx="118.2" cy="448.2" rx="57.7" ry="64.8" fill="none" stroke="#b4dcdc" stroke-opacity=".36" stroke-width=".9"/>
<ellipse cx="118.2" cy="448.2" rx="61.6" ry="64.8" fill="none" stroke="#b4dcdc" stroke-opacity=".24" stroke-width=".9"/>
<ellipse cx="118.2" cy="448.2" rx="64.0" ry="64.8" fill="none" stroke="#b4dcdc" stroke-opacity=".24" stroke-width=".9"/>
<ellipse cx="118.2" cy="448.2" rx="64.8" ry="64.8" fill="none" stroke="#b4dcdc" stroke-opacity=".16" stroke-width=".9"/>
<path d="M57 455C58 457.8 60 466.2 63 472C66 477.8 70.2 484.8 75 490C79.8 495.2 89.2 500.8 92 503" fill="none" stroke="#d0a000" stroke-width="1.2" opacity="0.8"/>
<path d="M56 440C56.3 436.7 56.3 425.8 58 420C59.7 414.2 64.7 407.5 66 405" fill="none" stroke="#88b000" stroke-width="1" opacity="0.7"/>
<path d="M75 490C78.3 491.7 89.2 497.2 95 500C100.8 502.8 107.5 505.8 110 507" fill="none" stroke="#c8c000" stroke-width="1" opacity="0.7"/>
<path d="M84 457C85.8 460.8 91 472.3 95 480C99 487.7 105.8 499.2 108 503" fill="none" stroke="#c8c8c8" stroke-width="0.8" opacity="0.6"/>
<path d="M133 457C132.2 460.8 129.8 472.8 128 480C126.2 487.2 123 496.7 122 500" fill="none" stroke="#c8c8c8" stroke-width="0.8" opacity="0.5"/>
<path d="M90 440C91.7 436.7 96.3 426.7 100 420C103.7 413.3 110 403.3 112 400" fill="none" stroke="#c8c8c8" stroke-width="0.8" opacity="0.5"/>
<path d="M131 411C134.2 413.3 145.2 420.8 150 425C154.8 429.2 158.3 434.2 160 436" fill="none" stroke="#c8c8c8" stroke-width="0.8" opacity="0.5"/>
<path d="M118.3 397V506" stroke="#d8d8d8" stroke-width="1"/>
<path d="M110.6 397.3C110.2 399.4 108.7 405.9 108 410C107.3 414.1 106.7 418.2 106.4 422C106.1 425.8 106.1 431.2 106 433" fill="none" stroke="#ff7d00" stroke-width="3.2"/>
<path d="M106 461C106.1 464.2 106.2 474.5 106.6 480C107 485.5 107.7 489.9 108.4 494C109.1 498.1 110.2 502.8 110.6 504.5" fill="none" stroke="#ffb400" stroke-width="3.0"/>
<path d="M119.7 392.8C122.2 394.3 129.9 397.8 135 402C140.1 406.2 145.9 412.7 150 418C154.1 423.3 158 431.2 159.6 433.8" fill="none" stroke="#e0a800" stroke-width="1.3"/>
<path d="M168.7 461C168.6 462.8 168.8 467.8 168 472C167.2 476.2 164.8 483.7 164.1 486" fill="none" stroke="#ff9a00" stroke-width="1.8"/>
<path d="M159.6 461C158.3 464.2 155.6 474 152 480C148.4 486 143 492.6 138 497C133 501.4 124.7 505.1 122 506.7" fill="none" stroke="#d8c800" stroke-width="1.4"/>
<path d="M127.7 457.7C127.3 460.8 126.2 470.1 125.6 476C125 481.9 124.5 490.2 124.3 493" fill="none" stroke="#8cc00a" stroke-width="1.2"/>
<path d="M148 497C150 494.8 157 488.5 160 484C163 479.5 165 472.3 166 470" fill="none" stroke="#d8c000" stroke-width="1.0" opacity="0.8"/>
<path d="M53.6 448.2H57.5" stroke="#ffa200" stroke-width="4"/>
<path d="M64.4 448.4H159.8" stroke="#d6d200" stroke-width="4.2"/>
<path d="M171.6 448.2H184" stroke="#94cc0a" stroke-width="3"/>
<polygon points="103.8,396.2 107.4,385.8 121.4,385.4 118.6,396.2" fill="#f2f4f4"/>
<polygon points="71.9,404.6 88.6,391.4 91.0,394.4 74.0,407.4" fill="#eef0f0"/>
<polygon points="149.4,389.6 151.0,388.6 166.4,402.6 165.3,404.4" fill="#e8eaea" opacity="0.85"/>
<polygon points="117.8,397.3 131.1,398.4 131.8,411.7 118.6,410.4" fill="#f4f6f6"/>
<polygon points="56.0,434.5 64.6,434.5 64.6,446.5 56.0,446.5" fill="#eef2f0"/>
<polygon points="56.0,446.5 64.6,446.5 64.6,458.8 56.0,458.8" fill="#7a6a50"/>
<polygon points="84.0,438.3 95.8,438.3 95.8,447.0 84.0,447.0" fill="#f2f4f2"/>
<polygon points="84.0,447.0 95.8,447.0 95.8,457.2 84.0,457.2" fill="#a48878"/>
<polygon points="98.1,433.3 115.9,433.3 115.9,446.4 98.1,446.4" fill="#f2f4f2"/>
<polygon points="98.1,446.4 115.9,446.4 115.9,460.0 98.1,460.0" fill="#5a5c38"/>
<polygon points="120.9,439.0 133.4,439.0 133.4,447.0 120.9,447.0" fill="#f2f4f2"/>
<polygon points="120.9,447.0 133.4,447.0 133.4,457.2 120.9,457.2" fill="#9c7e6c"/>
<polygon points="157.8,434.9 171.7,434.9 171.7,446.6 157.8,446.6" fill="#f0f2f0"/>
<polygon points="157.8,446.6 171.7,446.6 171.7,460.0 157.8,460.0" fill="#6a6240"/>
<path d="M64.4 448.4H159.8" stroke="#d6d200" stroke-width="3.6" opacity=".75"/>
<path d="M106.6 437 V446" stroke="#6a9a88" stroke-width="1.2"/>
<polygon points="116.3,493.0 128.8,493.6 128.4,503.3 116.3,502.6" fill="#8c6a58"/>
<polygon points="103.8,505.0 119.7,504.4 118.6,510.6 106.0,511.2" fill="#7a7460"/>
</g></svg>
</div></body></html>
